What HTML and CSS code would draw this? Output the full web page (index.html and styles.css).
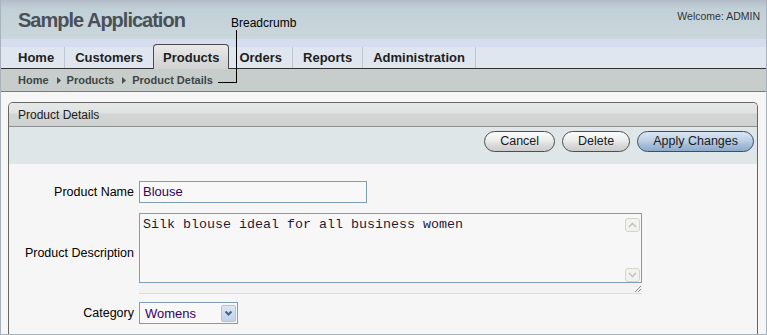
FILE: index.html
```html
<!DOCTYPE html>
<html>
<head>
<meta charset="utf-8">
<title>Sample Application</title>
<link rel="stylesheet" href="styles.css">
</head>
<body>
<div class="frame">
  <header class="header">
    <div class="title">Sample Application</div>
    <div class="welcome">Welcome: ADMIN</div>
  </header>
  <nav class="tabs">
    <a class="tab">Home</a>
    <a class="tab pre">Customers</a>
    <a class="tab sel">Products</a>
    <a class="tab">Orders</a>
    <a class="tab">Reports</a>
    <a class="tab">Administration</a>
  </nav>
  <div class="crumbs">
    <span>Home</span><svg class="arr" width="5" height="7" viewBox="0 0 5 7"><path d="M1 0 L5 3.5 L1 7 Z" fill="#4a5050"/></svg><span>Products</span><svg class="arr" width="5" height="7" viewBox="0 0 5 7"><path d="M1 0 L5 3.5 L1 7 Z" fill="#4a5050"/></svg><span>Product Details</span>
  </div>
  <div class="callout-label">Breadcrumb</div>
  <div class="callout-line"></div>
  <main class="content">
    <section class="region">
      <div class="region-head">Product Details</div>
      <div class="region-buttons">
        <button class="btn">Cancel</button>
        <button class="btn">Delete</button>
        <button class="btn primary">Apply Changes</button>
      </div>
      <div class="form">
        <label class="lbl">Product Name</label>
        <div class="input">Blouse</div>
        <label class="lbl">Product Description</label>
        <div class="ta-wrap">
          <div class="ta">
            <div class="ta-text">Silk blouse ideal for all business women</div>
            <div class="ta-scroll">
              <svg width="15" height="14" viewBox="0 0 15 14"><rect x="0.5" y="0.5" width="14" height="13" rx="2.5" fill="#f2f2ee" stroke="#d6d6c8"/><path d="M4 9 L7.5 5.5 L11 9" fill="none" stroke="#c4c4c4" stroke-width="1.6"/></svg>
              <svg width="15" height="14" viewBox="0 0 15 14"><rect x="0.5" y="0.5" width="14" height="13" rx="2.5" fill="#f2f2ee" stroke="#d6d6c8"/><path d="M4 5 L7.5 8.5 L11 5" fill="none" stroke="#c4c4c4" stroke-width="1.6"/></svg>
            </div>
          </div>
          <div class="ta-grip">
            <svg width="9" height="9" viewBox="0 0 9 9"><path d="M8 2 L2 8 M8 5 L5 8" stroke="#8a8a8a" stroke-width="1"/></svg>
          </div>
        </div>
        <label class="lbl">Category</label>
        <div class="select">
          <span>Womens</span>
          <span class="dd"><svg width="9" height="7" viewBox="0 0 9 7"><path d="M1.5 1.5 L4.5 4.5 L7.5 1.5" fill="none" stroke="#4d6185" stroke-width="2"/></svg></span>
        </div>
      </div>
    </section>
  </main>
</div>
</body>
</html>
```

FILE: styles.css
```css
html, body {
  margin: 0;
  padding: 0;
  background: #ffffff;
}

.frame {
  position: relative;
  width: 767px;
  height: 335px;
  box-sizing: border-box;
  border: 1px solid #aab3bd;
  border-top: none;
  overflow: hidden;
  font-family: "Liberation Sans", Arial, sans-serif;
  background: #f6f6f6;
}

.header {
  height: 39px;
  box-sizing: border-box;
  display: flex;
  justify-content: space-between;
  align-items: flex-start;
  padding: 0 6px 0 17px;
  background: linear-gradient(#b2bbc8 0, #b8c3cc 3px, #c1d0d7 9px, #c6d4da 24px, #c9d6dc 39px);
}

.title {
  padding-top: 10px;
  font-size: 20px;
  line-height: 20px;
  font-weight: bold;
  letter-spacing: -1px;
  color: #4a5057;
}

.welcome {
  padding-top: 10px;
  font-size: 10.5px;
  line-height: 12px;
  color: #333333;
}

.tabs {
  height: 29px;
  display: flex;
  align-items: flex-end;
  padding-left: 7px;
  border-bottom: 1px solid #333333;
  background: linear-gradient(#d6ddef 0, #d6ddef 8px, #dfe6ef 8px);
}

.tab {
  font-size: 13px;
  line-height: 21px;
  font-weight: bold;
  color: #1e1e1e;
  padding: 0 10px;
  border-right: 1px solid #bdc6d1;
}

.tab.pre {
  border-right: none;
}

.tab.sel {
  position: relative;
  padding: 2px 9px 1px;
  margin-bottom: -1px;
  border: 1px solid #4a4a4a;
  border-bottom: none;
  border-radius: 4px 4px 0 0;
  background: linear-gradient(#e9e9e9, #dadada 60%, #d2d2d2);
}

.crumbs {
  height: 22px;
  line-height: 22px;
  padding-left: 17px;
  border-bottom: 1px solid #777b7b;
  background: #c7cdcb;
  font-size: 11px;
  font-weight: bold;
  color: #3d4545;
  white-space: nowrap;
}

.arr {
  margin: 0 6px 0 7px;
  vertical-align: 0;
}

.callout-label {
  position: absolute;
  left: 230px;
  top: 16px;
  font-size: 12px;
  line-height: 14px;
  color: #000000;
}

.callout-line {
  position: absolute;
  left: 217px;
  top: 30px;
  width: 18px;
  height: 52px;
  border-right: 1px solid #000000;
  border-bottom: 1px solid #000000;
}

.content {
  padding: 10px 8px 0 7px;
}

.region {
  border: 1px solid #666666;
  border-bottom: none;
  border-radius: 5px 5px 0 0;
  overflow: hidden;
  min-height: 300px;
  background: #f6f6f6;
}

.region-head {
  height: 22px;
  line-height: 22px;
  padding: 1px 0 0 9px;
  border-bottom: 1px solid #8b9090;
  background: linear-gradient(#e6e8e8 0, #e2e4e4 40%, #d3d5d5 50%, #d0d2d2 100%);
  font-size: 12px;
  color: #202020;
}

.region-buttons {
  height: 37px;
  box-sizing: border-box;
  display: flex;
  justify-content: flex-end;
  align-items: flex-start;
  gap: 7px;
  padding: 4px 3px 0 0;
  background: #dfe6e8;
}

.btn {
  height: 21px;
  box-sizing: border-box;
  margin: 0;
  padding: 0 15px;
  border: 1px solid #4e4e4e;
  border-radius: 11px;
  font-family: "Liberation Sans", Arial, sans-serif;
  font-size: 12.5px;
  line-height: 19px;
  color: #1a1a1a;
  background: linear-gradient(#fbfbfb, #ececec 45%, #d9d9d9 70%, #cbcbcb);
}

.btn.primary {
  border-color: #3d4d66;
  background: linear-gradient(#dae6f3, #bdd0e6 45%, #a3bbd8 70%, #8eaacb);
}

.form {
  display: grid;
  grid-template-columns: 125px auto;
  column-gap: 5px;
  row-gap: 10px;
  justify-items: start;
  align-items: center;
  padding-top: 17px;
}

.lbl {
  justify-self: end;
  font-size: 12.5px;
  color: #000000;
  white-space: nowrap;
}

.input {
  width: 228px;
  height: 22px;
  box-sizing: border-box;
  border: 1px solid #7f9db9;
  padding-left: 3px;
  font-size: 13px;
  line-height: 20px;
  color: #330066;
  background: #f8f8f8;
}

.ta-wrap {
  width: 503px;
  margin-bottom: -2px;
}

.ta {
  height: 70px;
  box-sizing: border-box;
  border: 1px solid #7f9db9;
  display: flex;
  background: #f7f7f7;
}

.ta-text {
  flex: 1;
  padding: 3px 3px;
  font-family: "Liberation Mono", "Courier New", monospace;
  font-size: 13.33px;
  line-height: 15px;
  color: #1c1c3a;
}

.ta-scroll {
  width: 16px;
  display: flex;
  flex-direction: column;
  justify-content: space-between;
  padding: 4px 0 0 0;
}

.ta-scroll svg {
  display: block;
}

.ta-grip {
  height: 11px;
  box-sizing: border-box;
  display: flex;
  justify-content: flex-end;
  align-items: flex-end;
  border-bottom: 1px solid #dcdcdc;
  background: #f2f2f2;
}

.ta-grip svg {
  display: block;
}

.select {
  width: 99px;
  height: 22px;
  box-sizing: border-box;
  border: 1px solid #7f9db9;
  display: flex;
  justify-content: space-between;
  align-items: center;
  padding-left: 5px;
  font-size: 13px;
  color: #330066;
  background: #f8f8f8;
}

.dd {
  width: 15px;
  height: 17px;
  box-sizing: border-box;
  margin-right: 1px;
  margin-top: 1px;
  display: flex;
  align-items: center;
  justify-content: center;
  border: 1px solid #b2c4dc;
  border-radius: 2px;
  background: linear-gradient(#dbe6f4, #c0d2ea);
}
```
